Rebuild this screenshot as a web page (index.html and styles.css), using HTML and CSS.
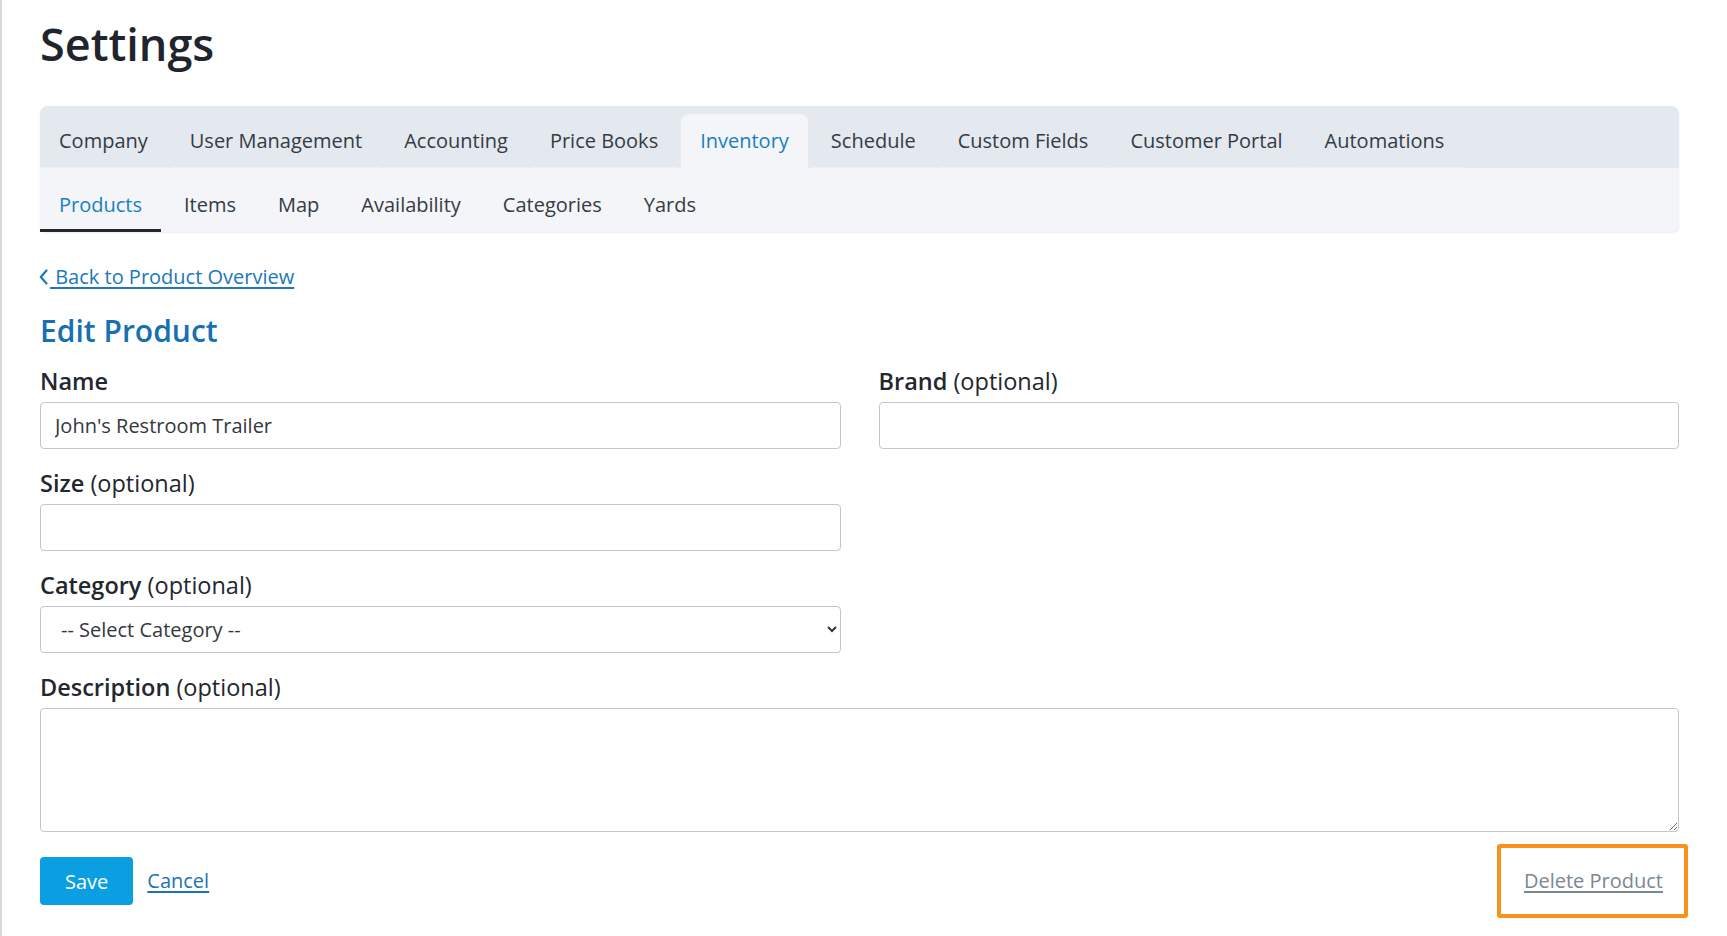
FILE: index.html
```html
<!DOCTYPE html>
<html lang="en">
<head>
<meta charset="utf-8">
<title>Settings – Edit Product</title>
<link rel="stylesheet" href="styles.css">
</head>
<body>
<div class="page">
  <h1 class="page-title">Settings</h1>

  <nav class="settings-nav">
    <ul class="tabs">
      <li><a class="tab" href="#">Company</a></li>
      <li><a class="tab" href="#">User Management</a></li>
      <li><a class="tab" href="#">Accounting</a></li>
      <li><a class="tab" href="#">Price Books</a></li>
      <li><a class="tab is-active" href="#">Inventory</a></li>
      <li><a class="tab" href="#">Schedule</a></li>
      <li><a class="tab" href="#">Custom Fields</a></li>
      <li><a class="tab" href="#">Customer Portal</a></li>
      <li><a class="tab" href="#">Automations</a></li>
    </ul>
    <ul class="subtabs">
      <li><a class="subtab is-active" href="#">Products</a></li>
      <li><a class="subtab" href="#">Items</a></li>
      <li><a class="subtab" href="#">Map</a></li>
      <li><a class="subtab" href="#">Availability</a></li>
      <li><a class="subtab" href="#">Categories</a></li>
      <li><a class="subtab" href="#">Yards</a></li>
    </ul>
  </nav>

  <div class="back-row">
    <a class="back-link" href="#"><svg class="back-icon" width="12" height="16" viewBox="0 0 12 16" aria-hidden="true"><path d="M8.5 1.5 L2.8 8 L8.5 14.5" fill="none" stroke="currentColor" stroke-width="2.2" stroke-linecap="round" stroke-linejoin="round"/></svg><span class="back-text">&nbsp;Back to Product Overview</span></a>
  </div>

  <h2 class="form-title">Edit Product</h2>

  <form class="product-form">
    <div class="field">
      <label class="field-label" for="name">Name</label>
      <input class="text-input" id="name" type="text" value="John's Restroom Trailer">
    </div>
    <div class="field">
      <label class="field-label" for="brand">Brand <span class="optional">(optional)</span></label>
      <input class="text-input" id="brand" type="text">
    </div>
    <div class="field field-left">
      <label class="field-label" for="size">Size <span class="optional">(optional)</span></label>
      <input class="text-input" id="size" type="text">
    </div>
    <div class="field field-left">
      <label class="field-label" for="category">Category <span class="optional">(optional)</span></label>
      <select class="select-input" id="category">
        <option>-- Select Category --</option>
      </select>
    </div>
    <div class="field field-full field-last">
      <label class="field-label" for="description">Description <span class="optional">(optional)</span></label>
      <textarea class="text-area" id="description"></textarea>
    </div>
    <div class="form-actions">
      <div class="actions-main">
        <button class="btn-primary" type="button">Save</button>
        <a class="cancel-link" href="#">Cancel</a>
      </div>
      <div class="delete-wrap">
        <a class="delete-link" href="#">Delete Product</a>
      </div>
    </div>
  </form>
</div>
</body>
</html>
```

FILE: styles.css
```css
* {
  box-sizing: border-box;
}

html,
body {
  margin: 0;
  height: 100%;
  overflow: hidden;
}

body {
  font-family: "Open Sans", "Noto Sans", sans-serif;
  color: #2a2f36;
  background: #fff;
}

.page {
  min-height: 100%;
  border-left: 2px solid #dadada;
  padding: 16px 48px 0 38px;
}

.page-title {
  margin: 0;
  font-size: 45px;
  line-height: 55px;
  font-weight: 600;
  color: #20252d;
}

/* Settings navigation: main tabs + sub tabs */
.settings-nav {
  margin-top: 35px;
  background: #e4e9f0;
  border-radius: 8px 8px 6px 6px;
  box-shadow: 0 1px 2px rgba(0, 0, 0, 0.08);
}

.tabs,
.subtabs {
  display: flex;
  margin: 0;
  padding: 0;
  list-style: none;
}

.tabs {
  gap: 4px;
  padding-top: 8px;
}

.tab {
  display: block;
  padding: 12px 19px 11px;
  border-bottom: 1px solid #edf0f4;
  border-radius: 8px 8px 0 0;
  font-size: 20px;
  line-height: 30px;
  color: #353b43;
  text-decoration: none;
}

.tab.is-active {
  background: #f3f5f8;
  border-bottom-color: #f3f5f8;
  color: #1a7fc2;
}

.subtabs {
  gap: 4px;
  background: #f3f5f8;
  border-radius: 0 0 6px 6px;
}

.subtab {
  display: block;
  padding: 22px 19px 9px;
  border-bottom: 3px solid transparent;
  font-size: 20px;
  line-height: 30px;
  color: #353b43;
  text-decoration: none;
}

.subtab.is-active {
  color: #1a7fc2;
  border-bottom-color: #23272e;
}

/* Back link */
.back-row {
  margin-top: 30px;
  height: 30px;
  font-size: 20px;
  line-height: 30px;
}

.back-link {
  color: #1d77b8;
  text-decoration: none;
}

.back-icon {
  margin-left: -2px;
  vertical-align: -1px;
}

.back-text {
  text-decoration: underline;
  text-underline-offset: 3px;
}

.form-title {
  margin: 21px 0 0;
  font-size: 30px;
  line-height: 36px;
  font-weight: 600;
  color: #1670b1;
}

/* Product form */
.product-form {
  display: grid;
  grid-template-columns: 1fr 1fr;
  column-gap: 38px;
  margin-top: 15px;
}

.field {
  margin-bottom: 17px;
}

.field-left {
  grid-column: 1;
}

.field-full,
.form-actions {
  grid-column: 1 / -1;
}

.field-last {
  margin-bottom: 0;
}

.field-label {
  display: block;
  margin-bottom: 4px;
  font-size: 23.5px;
  line-height: 34px;
  font-weight: 600;
  color: #23272e;
}

.optional {
  font-weight: 400;
}

.text-input,
.select-input,
.text-area {
  display: block;
  width: 100%;
  border: 1px solid #c2c7cd;
  border-radius: 4px;
  background: #fff;
  font-family: inherit;
  font-size: 20px;
  color: #333840;
}

.text-input {
  height: 47px;
  padding: 0 14px;
}

.select-input {
  height: 47px;
  padding: 0 14px 0 16px;
}

.text-area {
  height: 124px;
  padding: 10px 14px;
}

.form-actions {
  display: flex;
  align-items: center;
  justify-content: space-between;
  margin-top: 12px;
}

.actions-main {
  display: flex;
  align-items: center;
}

.btn-primary {
  height: 48px;
  padding: 0 25px;
  border: 0;
  border-radius: 4px;
  background: #0a9fe3;
  color: #fff;
  font-family: inherit;
  font-size: 20px;
}

.cancel-link {
  margin-left: 14px;
  font-size: 20px;
  line-height: 30px;
  color: #1c73b4;
  text-underline-offset: 3px;
}

.delete-wrap {
  margin-right: -9px;
  padding: 18px 21px 18px 23px;
  border: 4px solid #f7931d;
  border-radius: 3px;
  font-size: 20px;
  line-height: 30px;
}

.delete-link {
  color: #7b8794;
  text-underline-offset: 3px;
}
```
